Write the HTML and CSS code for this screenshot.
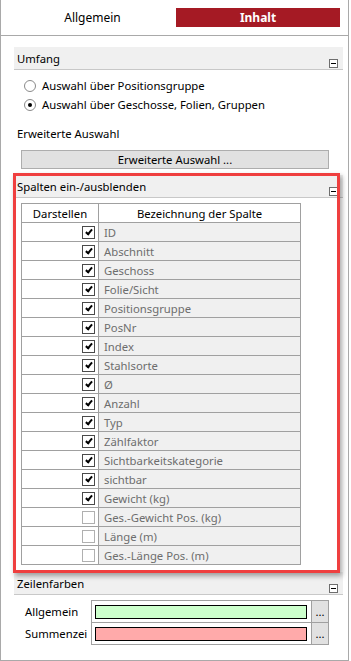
FILE: index.html
```html
<!DOCTYPE html>
<html lang="de">
<head>
    <meta charset="UTF-8">
    <title>Inhalt</title>
    <link rel="stylesheet" href="styles.css">
</head>
<body>
    <div class="panel">
        <div class="tabs">
            <div class="tab">Allgemein</div>
            <div class="tab active">Inhalt</div>
        </div>
        <div class="content">
            <div class="group-head"><span>Umfang</span><span class="collapse"></span></div>
            <div class="radios">
                <div class="radio"><span class="circle"></span>Auswahl über Positionsgruppe</div>
                <div class="radio"><span class="circle on"></span>Auswahl über Geschosse, Folien, Gruppen</div>
            </div>
            <div class="label">Erweiterte Auswahl</div>
            <div class="button">Erweiterte Auswahl ...</div>

            <div class="group-head spalten"><span>Spalten ein-/ausblenden</span><span class="collapse"></span></div>
            <table class="grid">
                <tr><th class="col1">Darstellen</th><th>Bezeichnung der Spalte</th></tr>
                <tr><td class="col1"><span class="check on"></span></td><td class="name">ID</td></tr>
                <tr><td class="col1"><span class="check on"></span></td><td class="name">Abschnitt</td></tr>
                <tr><td class="col1"><span class="check on"></span></td><td class="name">Geschoss</td></tr>
                <tr><td class="col1"><span class="check on"></span></td><td class="name">Folie/Sicht</td></tr>
                <tr><td class="col1"><span class="check on"></span></td><td class="name">Positionsgruppe</td></tr>
                <tr><td class="col1"><span class="check on"></span></td><td class="name">PosNr</td></tr>
                <tr><td class="col1"><span class="check on"></span></td><td class="name">Index</td></tr>
                <tr><td class="col1"><span class="check on"></span></td><td class="name">Stahlsorte</td></tr>
                <tr><td class="col1"><span class="check on"></span></td><td class="name">Ø</td></tr>
                <tr><td class="col1"><span class="check on"></span></td><td class="name">Anzahl</td></tr>
                <tr><td class="col1"><span class="check on"></span></td><td class="name">Typ</td></tr>
                <tr><td class="col1"><span class="check on"></span></td><td class="name">Zählfaktor</td></tr>
                <tr><td class="col1"><span class="check on"></span></td><td class="name">Sichtbarkeitskategorie</td></tr>
                <tr><td class="col1"><span class="check on"></span></td><td class="name">sichtbar</td></tr>
                <tr><td class="col1"><span class="check on"></span></td><td class="name">Gewicht (kg)</td></tr>
                <tr><td class="col1"><span class="check"></span></td><td class="name">Ges.-Gewicht Pos. (kg)</td></tr>
                <tr><td class="col1"><span class="check"></span></td><td class="name">Länge (m)</td></tr>
                <tr><td class="col1"><span class="check"></span></td><td class="name">Ges.-Länge Pos. (m)</td></tr>
            </table>

            <div class="group-head zeilen"><span>Zeilenfarben</span><span class="collapse"></span></div>
            <table class="colors">
                <tr><td class="clabel">Allgemein</td><td class="cell"><div class="swatch green"></div></td><td class="dots">...</td></tr>
                <tr><td class="clabel">Summenzei</td><td class="cell"><div class="swatch pink"></div></td><td class="dots">...</td></tr>
            </table>
        </div>
        <div class="highlight"></div>
    </div>
</body>
</html>
```

FILE: styles.css
```css
body {
    margin: 0;
    font-family: "Noto Sans", "DejaVu Sans", sans-serif;
    font-size: 11.3px;
    color: #000;
    background: #fff;
}
.panel {
    position: relative;
    width: 349px;
    height: 661px;
    box-sizing: border-box;
    border: 1px solid #a9a9a9;
    border-top: none;
}
.tabs {
    display: flex;
    height: 36px;
    box-sizing: border-box;
    padding: 8px 8px 0 8px;
    border-bottom: 1px solid #a9a9a9;
}
.tab {
    flex: 1;
    height: 19px;
    line-height: 19px;
    text-align: center;
    font-size: 12px;
}
.tab.active {
    flex: 0 0 164px;
    background: #a51a24;
    color: #fff;
    font-weight: bold;
}
.content {
    padding: 11px 5px 0 13px;
}
.group-head {
    display: flex;
    justify-content: space-between;
    height: 23px;
    box-sizing: border-box;
    padding: 4px 5px 0 3px;
    background: #f0f0f0;
    border-bottom: 1px solid #c8c8c8;
}
.group-head.spalten {
    margin-top: 6px;
}
.group-head.zeilen {
    margin-top: 7px;
}
.collapse {
    position: relative;
    align-self: flex-end;
    width: 9px;
    height: 9px;
    margin-bottom: 1px;
    box-sizing: border-box;
    border: 1px solid #6e6e6e;
    background: #fff;
}
.collapse::after {
    content: "";
    position: absolute;
    left: 1px;
    top: 3px;
    width: 5px;
    height: 1px;
    background: #000;
}
.radios {
    margin-top: 6px;
}
.radio {
    display: flex;
    align-items: center;
    height: 19px;
    padding-left: 10px;
}
.circle {
    position: relative;
    width: 12px;
    height: 12px;
    box-sizing: border-box;
    margin-right: 6px;
    border: 1px solid #8a8a8a;
    border-radius: 50%;
    background: #fff;
}
.circle.on::after {
    content: "";
    position: absolute;
    left: 3px;
    top: 3px;
    width: 4px;
    height: 4px;
    border-radius: 50%;
    background: #000;
}
.label {
    height: 19px;
    line-height: 19px;
    margin-top: 10px;
    padding-left: 3px;
}
.button {
    width: 308px;
    height: 19px;
    line-height: 17px;
    box-sizing: border-box;
    margin: 7px 0 0 7px;
    text-align: center;
    background: #e1e1e1;
    border: 1px solid #adadad;
}
.grid {
    margin: 5px 0 0 7px;
    width: 280px;
    table-layout: fixed;
    border-collapse: collapse;
}
.grid th,
.grid td {
    height: 18px;
    padding: 0;
    border: 1px solid #a0a0a0;
    font-weight: normal;
    text-align: center;
    line-height: 17px;
    white-space: nowrap;
    overflow: hidden;
}
.grid .col1 {
    width: 76px;
    text-align: right;
}
.grid th.col1 {
    text-align: center;
}
.grid td.col1 {
    padding-right: 3px;
}
.grid td.name {
    text-align: left;
    padding-left: 5px;
    background: #f0f0f0;
    color: #6d6d6d;
}
.check {
    display: inline-block;
    vertical-align: middle;
    position: relative;
    top: -1px;
    width: 13px;
    height: 13px;
    box-sizing: border-box;
    border: 1px solid #b0b0b0;
    background: #fff;
}
.check.on {
    border-color: #4a4a4a;
}
.check.on::after {
    content: "";
    position: absolute;
    left: 4px;
    top: 1px;
    width: 2px;
    height: 5px;
    border: solid #000;
    border-width: 0 2px 2px 0;
    transform: rotate(40deg);
}
.colors {
    margin: 5px 0 0 7px;
    border-collapse: collapse;
}
.colors td {
    padding: 0;
    height: 18px;
}
.clabel {
    width: 66px;
    padding-left: 4px !important;
}
.cell {
    width: 212px;
    border: 1px solid #a0a0a0;
    padding: 2px 4px 1px 3px !important;
}
.swatch {
    height: 14px;
    box-sizing: border-box;
    border: 1px solid #000;
}
.swatch.green {
    background: #ccffcc;
}
.swatch.pink {
    background: #ffaaaa;
}
.dots {
    width: 16px;
    border: 1px solid #a0a0a0;
    background: #e1e1e1;
    text-align: center;
    line-height: 14px;
}
.highlight {
    position: absolute;
    left: 12px;
    top: 173px;
    width: 327px;
    height: 400px;
    box-sizing: border-box;
    border: 3px solid #ef3f3f;
    box-shadow: 2px 3px 5px rgba(0, 0, 0, 0.35);
    pointer-events: none;
}
```
